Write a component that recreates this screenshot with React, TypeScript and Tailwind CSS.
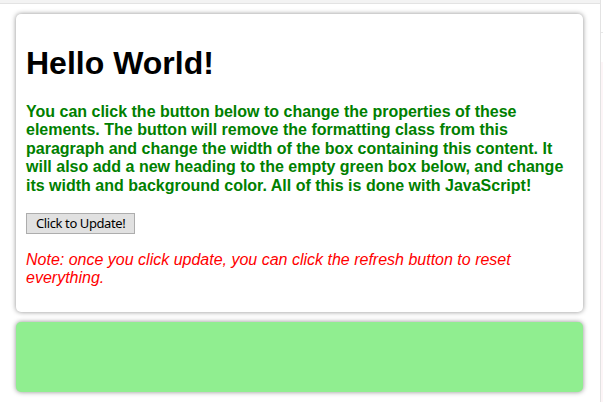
import React from 'react';

export default function App() {
  return (
    <div className="flex w-[603px] h-[402px] overflow-hidden bg-white font-['Liberation_Sans',Arial,sans-serif]">
      <div className="flex-1 flex flex-col">
        {/* top chrome strip */}
        <div className="h-[4px] bg-[#f3f3f3] border-b border-[#e3e3e3]" />

        <div className="pt-[10px] pl-[16px] pr-[17px] flex flex-col gap-[10px]">
          {/* main card */}
          <div className="h-[298px] rounded-[5px] bg-white p-[10px] shadow-[0_0_5px_rgba(0,0,0,0.45)]">
            <h1 className="mt-[21px] mb-[21px] text-[32px] leading-[37px] font-bold text-black">Hello World!</h1>
            <p className="text-[16px] leading-[18.4px] font-bold text-[#008000]">
              You can click the button below to change the properties of these elements. The button will remove the formatting class from this paragraph and change the width of the box containing this content. It will also add a new heading to the empty green box below, and change its width and background color. All of this is done with JavaScript!
            </p>
            <div className="mt-[16px]">
              <button className="h-[21px] px-[9px] border border-[#adadad] bg-[#e1e1e1] text-[13px] tracking-[-0.4px] leading-[17px] text-black font-['Noto_Sans',sans-serif]">
                Click to Update!
              </button>
            </div>
            <p className="mt-[16px] text-[16px] leading-[18.4px] italic text-[#ff0000]">
              Note: once you click update, you can click the refresh button to reset everything.
            </p>
          </div>

          {/* empty green box */}
          <div className="h-[70px] rounded-[5px] bg-[#90ee90] shadow-[0_0_5px_rgba(0,0,0,0.45)]" />
        </div>
      </div>

      {/* right side sliver */}
      <div className="w-[3px] border-l border-[#e3e3e3] bg-white flex flex-col">
        <div className="h-[33px] border-b border-[#e8e8e8]" />
        <div className="h-[29px]" />
        <div className="flex-1 bg-[#fdf5f7]" />
      </div>
    </div>
  );
}
